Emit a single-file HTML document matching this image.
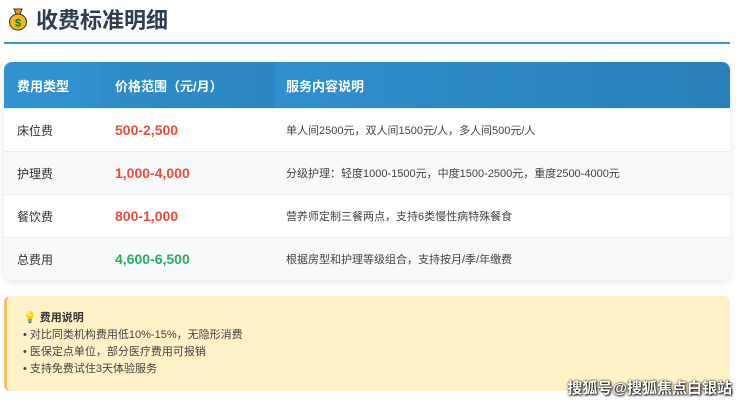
<!DOCTYPE html><html><head><meta charset="utf-8"><style>
*{margin:0;padding:0;box-sizing:border-box}
body{width:740px;height:403px;background:#fff;font-family:"Liberation Sans","Noto Sans CJK SC",sans-serif;position:relative;overflow:hidden;color:#333}
.title{position:absolute;left:8px;top:4px;height:30px;display:flex;align-items:center;font-size:22px;font-weight:bold;color:#2c3e50}
.line{position:absolute;left:4px;top:42px;width:726px;height:2px;background:#3498db}
.tbl{position:absolute;left:4px;top:62px;width:726px;border-radius:8px;overflow:hidden;box-shadow:0 2px 8px rgba(0,0,0,.1)}
.hd{display:flex;height:46px;background:linear-gradient(90deg,#3498db,#2980b9);color:#fff;font-weight:bold;font-size:13px}
.hd div,.r div{display:flex;align-items:center}
.c1{width:98px;padding-left:13px}.c2{width:172px;padding-left:13px}.c3{flex:1;padding-left:12px}
.hd .c1{background:rgba(0,0,0,.04)}.hd .c2{background:rgba(0,0,0,.06)}
.r{display:flex;height:43px;font-size:12px;border-top:1px solid #eee}
.r:nth-child(odd){background:#f8f9fa}
.r .c2{font-weight:bold;font-size:14px;color:#e74c3c}
.r .c3{font-size:11px;color:#444}
.note{position:absolute;left:4px;top:296px;width:726px;height:95px;background:#fef0c7;border-left:3px solid #f5c26b;border-radius:6px;padding:14px 0 0 16px;font-size:11px;color:#444;line-height:17px}
.wm{position:absolute;right:8px;top:377px;color:#fff;font-size:15px;font-weight:bold;text-shadow:0 0 2px #000,1px 1px 2px #000}
</style></head><body>
<div class="title"><svg width="20" height="24" viewBox="0 0 20 24" style="margin-right:8px"><path d="M6 2h8l-2 5h-4z" fill="#e0a020" stroke="#333" stroke-width="1"/><ellipse cx="10" cy="15" rx="8.5" ry="8" fill="#f1b81a" stroke="#333" stroke-width="1"/><text x="10" y="19.5" font-size="11" text-anchor="middle" fill="#1a7a2a" font-weight="bold" font-family="Liberation Sans">$</text></svg>收费标准明细</div>
<div class="line"></div>
<div class="tbl">
<div class="hd"><div class="c1">费用类型</div><div class="c2">价格范围（元/月）</div><div class="c3">服务内容说明</div></div>
<div class="r" style="background:#fff"><div class="c1">床位费</div><div class="c2">500-2,500</div><div class="c3">单人间2500元，双人间1500元/人，多人间500元/人</div></div>
<div class="r" style="background:#f8f9fa"><div class="c1">护理费</div><div class="c2">1,000-4,000</div><div class="c3">分级护理：轻度1000-1500元，中度1500-2500元，重度2500-4000元</div></div>
<div class="r" style="background:#fff"><div class="c1">餐饮费</div><div class="c2">800-1,000</div><div class="c3">营养师定制三餐两点，支持6类慢性病特殊餐食</div></div>
<div class="r" style="background:#f8f9fa"><div class="c1">总费用</div><div class="c2" style="color:#27ae60">4,600-6,500</div><div class="c3">根据房型和护理等级组合，支持按月/季/年缴费</div></div>
</div>
<div class="note"><div style="font-weight:bold;color:#333">💡 费用说明</div>• 对比同类机构费用低10%-15%，无隐形消费<br>• 医保定点单位，部分医疗费用可报销<br>• 支持免费试住3天体验服务</div>
<div class="wm">搜狐号@搜狐焦点白银站</div>
</body></html>
